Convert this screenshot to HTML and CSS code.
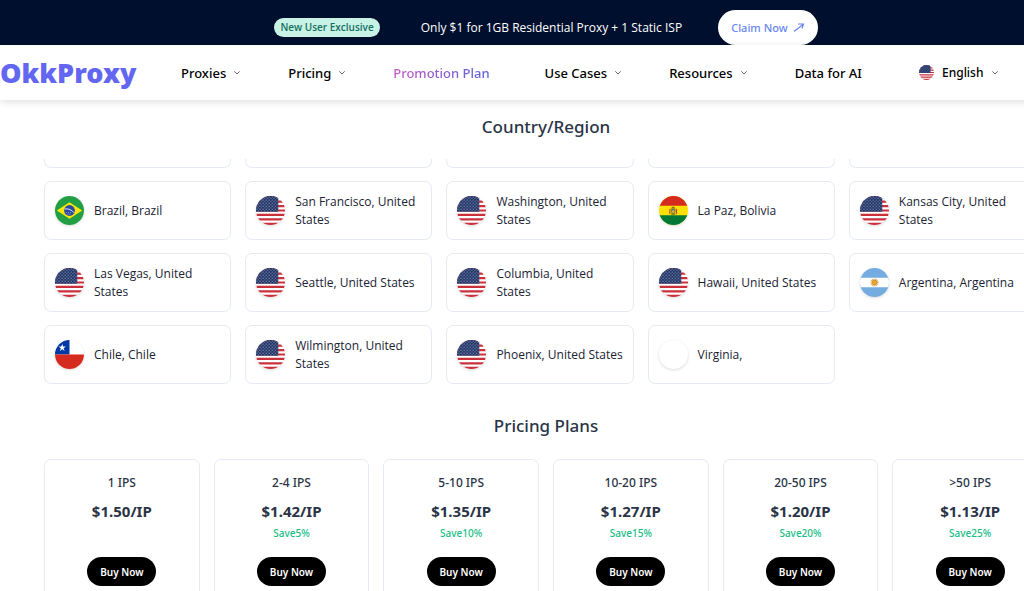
FILE: index.html
```html
<!DOCTYPE html>
<html lang="en">
<head>
<meta charset="utf-8">
<meta name="viewport" content="width=device-width, initial-scale=1">
<title>OkkProxy - Pricing</title>
<link rel="stylesheet" href="styles.css">
</head>
<body>
<svg class="sprite" aria-hidden="true">
  <defs>
    <pattern id="stars" width="3" height="3" patternUnits="userSpaceOnUse">
      <circle cx="0.8" cy="0.8" r="0.45" fill="#fff"/><circle cx="2.3" cy="2.3" r="0.45" fill="#fff"/>
    </pattern>
    <symbol id="us" viewBox="0 0 28 28">
      <path fill="#fff" d="M0 0h28v28H0z"/>
      <path stroke="#c9303c" stroke-width="2.15" d="M0 1.08h28M0 5.38h28M0 9.69h28M0 14h28M0 18.3h28M0 22.6h28M0 26.9h28"/>
      <path fill="#1c3166" d="M0 0h21.5v15.1H0z"/>
      <path fill="url(#stars)" d="M0 0h21.5v15.1H0z"/>
    </symbol>
    <symbol id="br" viewBox="0 0 28 28">
      <path fill="#229e45" d="M0 0h28v28H0z"/>
      <path fill="#f8e509" d="M14 6l12.3 8L14 22 1.700 14z"/>
      <circle cx="14" cy="14" r="5.200" fill="#2b49a3"/>
      <path fill="none" stroke="#eef" stroke-width="0.9" d="M9.200 12.500c3.700-.5 7 .8 9.200 3.700"/>
      <path fill="none" stroke="#dfe6ff" stroke-width="0.7" stroke-dasharray="0.700 1.400" d="M10.500 16h5M12 17.600h3.500"/>
    </symbol>
    <symbol id="bo" viewBox="0 0 28 28">
      <path fill="#ffe000" d="M0 0h28v28H0z"/>
      <path fill="#d52b1e" d="M0 0h28v9.300H0z"/>
      <path fill="#007934" d="M0 18.700h28V28H0z"/>
      <path fill="none" stroke="#b8402c" stroke-width="1" d="M10.700 17.300c-1-2 .2-3.300 0-5M16.700 17.300c1-2-.2-3.300 0-5"/>
      <path fill="none" stroke="#6b6520" stroke-width="1" d="M12 12l1.700-1.200L15.500 12M11.800 17.500h3.900"/>
      <ellipse cx="13.700" cy="14.500" rx="2" ry="2.500" fill="#428b83" stroke="#a56c25" stroke-width=".7"/>
      <path fill="#d8b63a" d="M12.300 14.800l1.400-1.200 1.500 1.200-.8 1.400h-1.500z"/>
    </symbol>
    <symbol id="ar" viewBox="0 0 28 28">
      <path fill="#74acdf" d="M0 0h28v28H0z"/>
      <path fill="#fff" d="M0 9.300h28v9.400H0z"/>
      <circle cx="14" cy="14" r="3.200" fill="none" stroke="#dba852" stroke-width="1.400" stroke-dasharray="0.800 0.450"/>
      <circle cx="14" cy="14" r="2.300" fill="#f0a51b" stroke="#a56522" stroke-width=".5"/>
    </symbol>
    <symbol id="cl" viewBox="0 0 28 28">
      <path fill="#fff" d="M0 0h28v14H0z"/>
      <path fill="#0039a6" d="M0 0h14v14H0z"/>
      <path fill="#d52b1e" d="M0 14h28v14H0z"/>
      <path fill="#fff" d="M7 3.800l.9 2.500h2.600l-2.100 1.600.8 2.600L7 9l-2.200 1.500.8-2.600-2.100-1.600h2.600z"/>
    </symbol>
    <symbol id="chevron" viewBox="0 0 8 8">
      <path fill="none" stroke="#555" stroke-width="0.900" d="M1.300 2.400L4 5l2.700-2.600"/>
    </symbol>
  </defs>
</svg>

<div class="page">
  <div class="promo">
    <span class="promo-tag">New User Exclusive</span>
    <span class="promo-text">Only $1 for 1GB Residential Proxy + 1 Static ISP</span>
    <a class="promo-link" href="#claim">Claim Now
      <svg class="arrow" viewBox="0 0 12 12" aria-hidden="true"><path fill="none" stroke="#6a86f0" stroke-width="1.200" d="M1 9.500L10 2.500M5 2h5.500L9 6.500"/></svg>
    </a>
  </div>

  <header class="header">
    <a class="logo" href="#home">OkkProxy</a>
    <nav class="nav" aria-label="Main">
      <a href="#proxies">Proxies<svg class="chevron" aria-hidden="true"><use href="#chevron"/></svg></a>
      <a href="#pricing">Pricing<svg class="chevron" aria-hidden="true"><use href="#chevron"/></svg></a>
      <a class="plain" href="#promotion"><span class="gradient">Promotion Plan</span></a>
      <a href="#cases">Use Cases<svg class="chevron" aria-hidden="true"><use href="#chevron"/></svg></a>
      <a href="#resources">Resources<svg class="chevron" aria-hidden="true"><use href="#chevron"/></svg></a>
      <a class="plain" href="#ai">Data for AI</a>
    </nav>
    <button class="language" type="button"><svg class="language-flag" aria-hidden="true"><use href="#us"/></svg>English<svg class="chevron" aria-hidden="true"><use href="#chevron"/></svg></button>
  </header>

  <main class="content">
    <h2 class="heading">Country/Region</h2>
    <div class="locations">
      <div class="tail"></div><div class="tail"></div><div class="tail"></div><div class="tail"></div><div class="tail"></div>
      <div class="location"><svg class="flag"><use href="#br"/></svg><span>Brazil, Brazil</span></div>
      <div class="location"><svg class="flag"><use href="#us"/></svg><span>San Francisco, United States</span></div>
      <div class="location"><svg class="flag"><use href="#us"/></svg><span>Washington, United States</span></div>
      <div class="location"><svg class="flag"><use href="#bo"/></svg><span>La Paz, Bolivia</span></div>
      <div class="location"><svg class="flag"><use href="#us"/></svg><span>Kansas City, United States</span></div>
      <div class="location"><svg class="flag"><use href="#us"/></svg><span>Las Vegas, United States</span></div>
      <div class="location"><svg class="flag"><use href="#us"/></svg><span>Seattle, United States</span></div>
      <div class="location"><svg class="flag"><use href="#us"/></svg><span>Columbia, United States</span></div>
      <div class="location"><svg class="flag"><use href="#us"/></svg><span>Hawaii, United States</span></div>
      <div class="location"><svg class="flag"><use href="#ar"/></svg><span>Argentina, Argentina</span></div>
      <div class="location"><svg class="flag"><use href="#cl"/></svg><span>Chile, Chile</span></div>
      <div class="location"><svg class="flag"><use href="#us"/></svg><span>Wilmington, United States</span></div>
      <div class="location"><svg class="flag"><use href="#us"/></svg><span>Phoenix, United States</span></div>
      <div class="location"><svg class="flag"></svg><span>Virginia,</span></div>
    </div>

    <h2 class="heading">Pricing Plans</h2>
    <div class="plans">
      <article class="plan"><h3>1 IPS</h3><p class="price">$1.50/IP</p><p class="save"></p><button type="button">Buy Now</button></article>
      <article class="plan"><h3>2-4 IPS</h3><p class="price">$1.42/IP</p><p class="save">Save5%</p><button type="button">Buy Now</button></article>
      <article class="plan"><h3>5-10 IPS</h3><p class="price">$1.35/IP</p><p class="save">Save10%</p><button type="button">Buy Now</button></article>
      <article class="plan"><h3>10-20 IPS</h3><p class="price">$1.27/IP</p><p class="save">Save15%</p><button type="button">Buy Now</button></article>
      <article class="plan"><h3>20-50 IPS</h3><p class="price">$1.20/IP</p><p class="save">Save20%</p><button type="button">Buy Now</button></article>
      <article class="plan"><h3>&gt;50 IPS</h3><p class="price">$1.13/IP</p><p class="save">Save25%</p><button type="button">Buy Now</button></article>
    </div>
  </main>
</div>
</body>
</html>
```
FILE: styles.css
```css
* {
  box-sizing: border-box;
}

body {
  margin: 0;
  height: 100vh;
  overflow: hidden;
  background: #fff;
  color: #2a3446;
  font-family: "Noto Sans", "Open Sans", sans-serif;
  font-size: 12px;
}

a {
  color: inherit;
  text-decoration: none;
}

button {
  border: 0;
  font: inherit;
  cursor: pointer;
}

.sprite {
  position: absolute;
  width: 0;
  height: 0;
}

.page {
  min-width: 1092px;
}

.promo {
  display: flex;
  align-items: flex-end;
  justify-content: center;
  height: 45px;
  background: #000f2e;
  font-family: "Open Sans", "Noto Sans", sans-serif;
}

.promo-tag {
  margin-bottom: 8px;
  padding: 0 6px;
  border-radius: 10px;
  background: #c9f2e7;
  color: #13705f;
  font-size: 10px;
  font-weight: 600;
  line-height: 19px;
}

.promo-text {
  margin: 0 36px 0 41px;
  color: #fff;
  line-height: 34px;
}

.promo-link {
  display: flex;
  align-items: center;
  gap: 5px;
  height: 35px;
  padding: 0 13px;
  border-radius: 18px;
  background: #fff;
  color: #6a86f0;
  font-family: "Noto Sans", sans-serif;
  font-size: 11px;
  font-weight: 500;
}

.arrow {
  width: 12px;
  height: 12px;
}

.header {
  position: relative;
  display: flex;
  align-items: center;
  height: 55px;
  background: #fff;
  box-shadow: 0 2px 8px rgba(0, 0, 0, 0.12);
  color: #000;
}

.logo {
  width: 181px;
  color: #6366f1;
  font-size: 27px;
  font-weight: 900;
}

.nav {
  display: flex;
  gap: 47px;
  font-size: 13px;
  font-weight: 500;
}

.nav a {
  display: flex;
  align-items: center;
  gap: 7px;
}

.nav .plain {
  padding-right: 8px;
}

.gradient {
  background: linear-gradient(90deg, #c555c4, #5565d8);
  -webkit-background-clip: text;
  background-clip: text;
  color: transparent;
}

.chevron {
  width: 8px;
  height: 8px;
}

.language {
  display: flex;
  align-items: center;
  gap: 8px;
  margin-left: 49px;
  padding: 0;
  background: none;
  color: #000;
  font-weight: 500;
}

.language-flag {
  width: 15px;
  height: 15px;
  border-radius: 50%;
}

.content {
  padding: 15px 44px 0;
}

.heading {
  margin: 0;
  font-size: 17px;
  font-weight: 500;
  line-height: 24px;
  text-align: center;
}

.locations {
  display: grid;
  grid-template-columns: repeat(5, 1fr);
  gap: 13px 14px;
  margin: 20px 0 30px;
  padding-right: 12px;
}

.tail {
  height: 9px;
  border: 1px solid #e6ebf3;
  border-top: 0;
  border-radius: 0 0 7px 7px;
}

.location {
  display: flex;
  align-items: center;
  gap: 10px;
  min-height: 59px;
  padding: 0 8px 0 10px;
  border: 1px solid #e6ebf3;
  border-radius: 7px;
  color: #1a2333;
  font-family: "Open Sans", "Noto Sans", sans-serif;
  font-weight: 500;
  line-height: 18px;
}

.flag {
  flex: none;
  width: 29px;
  height: 29px;
  border-radius: 50%;
  box-shadow: 0 1px 3px rgba(0, 0, 0, 0.15);
}

.plans {
  display: grid;
  grid-template-columns: repeat(6, 1fr);
  gap: 14px;
  margin-top: 21px;
}

.plan {
  display: flex;
  flex-direction: column;
  align-items: center;
  padding: 14px 14px 20px;
  border: 1px solid #e6ebf3;
  border-radius: 7px;
}

.plan h3,
.plan p {
  margin: 0;
}

.plan h3 {
  font-size: 12px;
  font-weight: 500;
  line-height: 18px;
}

.price {
  padding-top: 7px;
  font-size: 15px;
  font-weight: 700;
  line-height: 24px;
}

.save {
  height: 20px;
  color: #18bd87;
  font-size: 10px;
  font-weight: 500;
  line-height: 20px;
}

.plan button {
  height: 29px;
  margin-top: 14px;
  padding: 0 13px;
  border-radius: 15px;
  background: #000;
  color: #fff;
  font-size: 10px;
  font-weight: 600;
}
```
